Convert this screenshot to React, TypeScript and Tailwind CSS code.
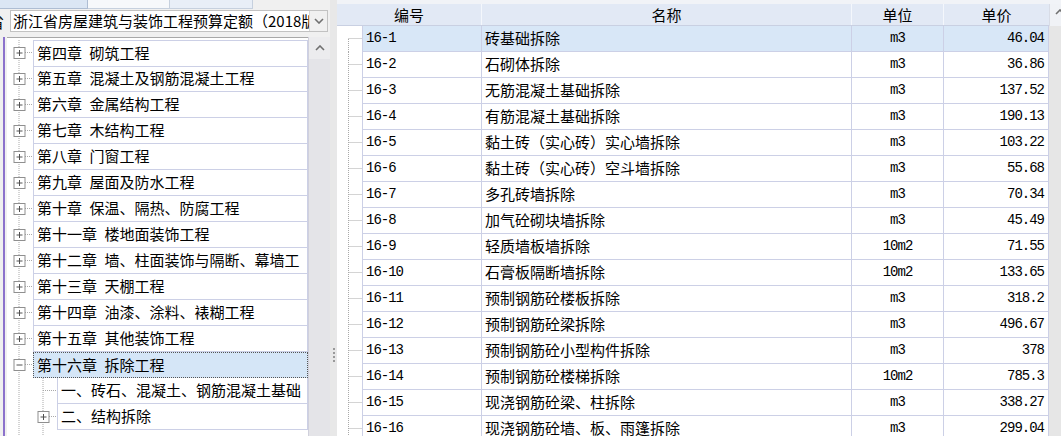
import React from 'react';

const chapters = [
  '第四章\u2002砌筑工程',
  '第五章\u2002混凝土及钢筋混凝土工程',
  '第六章\u2002金属结构工程',
  '第七章\u2002木结构工程',
  '第八章\u2002门窗工程',
  '第九章\u2002屋面及防水工程',
  '第十章\u2002保温、隔热、防腐工程',
  '第十一章\u2002楼地面装饰工程',
  '第十二章\u2002墙、柱面装饰与隔断、幕墙工',
  '第十三章\u2002天棚工程',
  '第十四章\u2002油漆、涂料、裱糊工程',
  '第十五章\u2002其他装饰工程',
];

const items = [
  ['16-1', '砖基础拆除', 'm3', '46.04'],
  ['16-2', '石砌体拆除', 'm3', '36.86'],
  ['16-3', '无筋混凝土基础拆除', 'm3', '137.52'],
  ['16-4', '有筋混凝土基础拆除', 'm3', '190.13'],
  ['16-5', '黏土砖（实心砖）实心墙拆除', 'm3', '103.22'],
  ['16-6', '黏土砖（实心砖）空斗墙拆除', 'm3', '55.68'],
  ['16-7', '多孔砖墙拆除', 'm3', '70.34'],
  ['16-8', '加气砼砌块墙拆除', 'm3', '45.49'],
  ['16-9', '轻质墙板墙拆除', '10m2', '71.55'],
  ['16-10', '石膏板隔断墙拆除', '10m2', '133.65'],
  ['16-11', '预制钢筋砼楼板拆除', 'm3', '318.2'],
  ['16-12', '预制钢筋砼梁拆除', 'm3', '496.67'],
  ['16-13', '预制钢筋砼小型构件拆除', 'm3', '378'],
  ['16-14', '预制钢筋砼楼梯拆除', '10m2', '785.3'],
  ['16-15', '现浇钢筋砼梁、柱拆除', 'm3', '338.27'],
  ['16-16', '现浇钢筋砼墙、板、雨篷拆除', 'm3', '299.04'],
];

// dotted tree connector with optional +/- box
function Gutter({ w, x, box, open, last, first }: { w: number; x: number; box?: boolean; open?: boolean; last?: boolean; first?: boolean }) {
  return (
    <svg width={w} height="26" viewBox={`0 0 ${w} 26`} className="shrink-0">
      <path d={`M${x} ${first ? 13 : 0}V${last ? 13 : 26}M${x} 12.5H${w}`} stroke="#a9a9a9" strokeDasharray="1 1" fill="none" />
      {box && (
        <g>
          <rect x={x - 5} y="7.5" width="11" height="11" fill="white" stroke="#8f8f8f" />
          <path d={`M${x - 2.5} 13h6`} stroke="#505050" />
          {!open && <path d={`M${x + 0.5} 10v6`} stroke="#505050" />}
        </g>
      )}
    </svg>
  );
}

function Line({ x }: { x: number }) {
  return (
    <svg width="26" height="26" viewBox="0 0 26 26" className="shrink-0">
      <path d={`M${x} 0V26`} stroke="#a9a9a9" strokeDasharray="1 1" fill="none" />
    </svg>
  );
}

function Chevron({ up }: { up?: boolean }) {
  return (
    <svg width="10" height="6" viewBox="0 0 10 6">
      <path d={up ? 'M1 5L5 1L9 5' : 'M1 1L5 5L9 1'} stroke="#707070" strokeWidth="1.6" fill="none" />
    </svg>
  );
}

export default function App() {
  return (
    <div className="w-[1061px] h-[436px] overflow-hidden flex bg-[#f0f0f0] text-black font-['Noto_Sans_CJK_SC',sans-serif] text-[15px]">
      {/* left: quota tree */}
      <div className="w-[330px] flex flex-col shrink-0 min-h-0">
        <div className="h-[9px] shrink-0 flex">
          <div className="w-[88px] bg-[#dbe6f4] border-r border-b border-[#aebdd3]" />
          <div className="w-[82px] bg-[#f6f8fb] border-r border-b border-[#c6d0de]" />
          <div className="w-[83px] bg-[#e8eef7] border-r border-b border-[#c6d0de]" />
          <div className="flex-1" />
        </div>
        <div className="h-[28px] shrink-0 flex items-start pt-[1px]">
          <div className="w-[10px] h-[22px] overflow-hidden flex items-center">
            <span className="-ml-[11px] leading-none">省</span>
          </div>
          <div className="w-[318px] h-[22px] flex border border-[#c2c2c2] bg-white">
            <div className="flex-1 overflow-hidden whitespace-nowrap pl-[2px] leading-[20px]">浙江省房屋建筑与装饰工程预算定额（2018版）</div>
            <div className="w-[18px] flex items-center justify-center bg-[#f0f0f0] border-l border-[#d6d6d6]">
              <Chevron />
            </div>
          </div>
        </div>
        <div className="flex-1 min-h-0 flex">
          <div className="w-[7px] flex">
            <div className="ml-[3px] w-[2px] bg-[#8c72cc]" />
          </div>
          <div className="w-[301px] bg-white border-t border-[#a8a8a8] pt-[2px] overflow-hidden">
            {chapters.map((c, i) => (
              <div key={c} className="flex h-[26px]">
                <Gutter w={26} x={12} box />
                <div className={`flex-1 flex items-center pl-[3px] border-l border-r border-b border-[#ccd0e6] whitespace-nowrap overflow-hidden ${i === 0 ? 'border-t h-[27px]' : ''}`}>
                  {c}
                </div>
              </div>
            ))}
            <div className="flex h-[26px]">
              <Gutter w={26} x={12} box open />
              <div className="flex-1 flex items-center pl-[3px] bg-[#d5e6f7] border border-dotted border-[#555]">
                第十六章{'\u2002'}拆除工程
              </div>
            </div>
            <div className="flex h-[26px]">
              <Line x={12} />
              <Gutter w={24} x={10} />
              <div className="flex-1 flex items-center pl-[3px] border-l border-r border-b border-[#ccd0e6] whitespace-nowrap overflow-hidden">
                一、砖石、混凝土、钢筋混凝土基础
              </div>
            </div>
            <div className="flex h-[26px]">
              <Line x={12} />
              <Gutter w={24} x={10} box />
              <div className="flex-1 flex items-center pl-[3px] border-l border-r border-b border-[#ccd0e6] whitespace-nowrap overflow-hidden">
                二、结构拆除
              </div>
            </div>
            <div className="flex h-[26px]">
              <Line x={12} />
              <Line x={10} />
            </div>
          </div>
          <div className="w-[22px] bg-[#e4e4e8] border-l border-[#d0d0dc] flex flex-col items-center">
            <div className="h-[22px] w-full bg-[#ececee] flex items-center justify-center">
              <Chevron up />
            </div>
          </div>
        </div>
      </div>

      {/* splitter */}
      <div className="w-[7px] shrink-0 bg-[#e8e8e8] flex flex-col items-end pr-[2px]">
        <div className="mt-[348px] flex flex-col gap-[2px]">
          <div className="w-[2px] h-[2px] bg-[#9a9a9a]" />
          <div className="w-[2px] h-[2px] bg-[#9a9a9a]" />
          <div className="w-[2px] h-[2px] bg-[#9a9a9a]" />
          <div className="w-[2px] h-[2px] bg-[#9a9a9a]" />
        </div>
      </div>

      {/* right: quota items */}
      <div className="flex-1 flex bg-white min-h-0">
        <div className="w-[712px] flex flex-col min-h-0">
          <div className="h-[4px] shrink-0 bg-[#f1f3f7]" />
          <div className="h-[22px] shrink-0 flex bg-[#e2e9f5] border-b border-[#c9d0e2] leading-[21px]">
            <div className="w-[145px] text-center border-r border-[#f4f7fc]">编号</div>
            <div className="w-[370px] text-center border-r border-[#f4f7fc]">名称</div>
            <div className="w-[92px] text-center border-r border-[#f4f7fc]">单位</div>
            <div className="w-[105px] text-center">单价</div>
          </div>
          {items.map(([code, name, unit, price], i) => (
            <div key={code} className="flex h-[26px] shrink-0">
              <Gutter w={25} x={11.5} first={i === 0} />
              <div className={`flex ${i === 0 ? 'bg-[#d8e7f7]' : 'bg-white'}`}>
                <div className="w-[120px] flex items-center pl-[3px] border-l border-r border-b border-[#ccd0e6] font-['Liberation_Mono',monospace] text-[14px] tracking-[-1px]">
                  {code}
                </div>
                <div className="w-[370px] flex items-center pl-[3px] border-r border-b border-[#ccd0e6] whitespace-nowrap overflow-hidden">
                  {name}
                </div>
                <div className="w-[92px] flex items-center justify-center border-r border-b border-[#ccd0e6] font-['Liberation_Mono',monospace] text-[14px] tracking-[-1px]">
                  {unit}
                </div>
                <div className="w-[105px] flex items-center justify-end pr-[4px] border-r border-b border-[#ccd0e6] font-['Liberation_Mono',monospace] text-[14px] tracking-[-1px]">
                  {price}
                </div>
              </div>
            </div>
          ))}
        </div>
        <div className="flex-1 flex flex-col bg-[#e6e6e6]">
          <div className="h-[4px] shrink-0 bg-[#f1f3f7]" />
          <div className="h-[22px] shrink-0 bg-[#f0f2f6] border-l border-[#d8dce6] flex items-start pl-[5px] pt-[5px] overflow-hidden">
            <Chevron up />
          </div>
        </div>
      </div>
    </div>
  );
}
